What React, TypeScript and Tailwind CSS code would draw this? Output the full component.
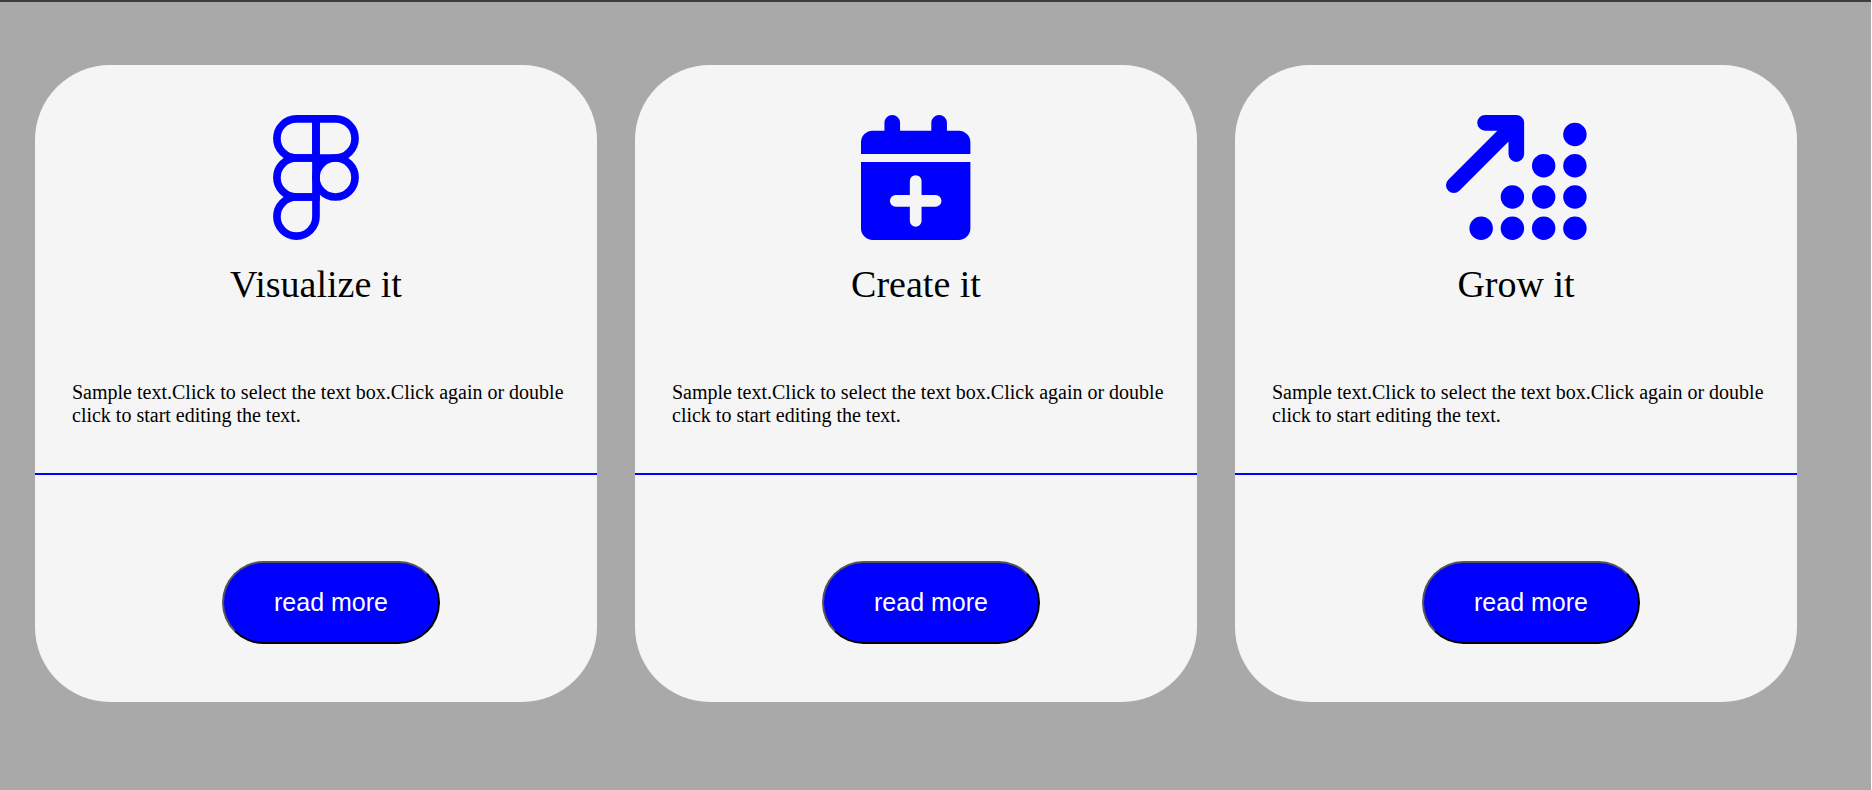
import type { ReactNode } from "react";

const sampleText =
  "Sample text.Click to select the text box.Click again or double click to start editing the text.";

function DesignIcon() {
  return (
    <svg
      viewBox="0 0 11 16"
      className="h-[125px] w-auto overflow-visible"
      fill="none"
      stroke="currentColor"
      strokeWidth="0.98"
      aria-hidden="true"
    >
      <path d="M5.5.5H3a2.5 2.5 0 0 0 0 5h2.5z" />
      <path d="M5.5.5H8a2.5 2.5 0 0 1 0 5H5.5z" />
      <path d="M5.5 5.5H3a2.5 2.5 0 0 0 0 5h2.5z" />
      <circle cx="8" cy="8" r="2.5" />
      <path d="M5.5 10.5H3A2.5 2.5 0 1 0 5.5 13z" />
    </svg>
  );
}

function CalendarIcon() {
  return (
    <svg
      viewBox="0 0 14 16"
      className="h-[125px] w-auto overflow-visible"
      fill="currentColor"
      aria-hidden="true"
    >
      <path d="M0 5V3.5A1.5 1.5 0 0 1 1.5 2H3V1a1 1 0 0 1 2 0v1h4V1a1 1 0 0 1 2 0v1h1.5A1.5 1.5 0 0 1 14 3.5V5z" />
      <path d="M0 6h14v8.5a1.5 1.5 0 0 1-1.5 1.5h-11A1.5 1.5 0 0 1 0 14.5z" />
      <path d="M4.45 11h5.1M7 8.45v5.1" stroke="#f5f5f5" strokeWidth="1.5" strokeLinecap="round" />
    </svg>
  );
}

const dots = [
  [16.5, 2.5],
  [12.5, 6.5],
  [16.5, 6.5],
  [8.5, 10.5],
  [12.5, 10.5],
  [16.5, 10.5],
  [4.5, 14.5],
  [8.5, 14.5],
  [12.5, 14.5],
  [16.5, 14.5],
];

function GrowthIcon() {
  return (
    <svg
      viewBox="0 0 18 16"
      className="h-[125px] w-auto overflow-visible"
      fill="currentColor"
      aria-hidden="true"
    >
      <path
        d="M1 9l8-8M5 1h4v4"
        fill="none"
        stroke="currentColor"
        strokeWidth="2"
        strokeLinecap="round"
        strokeLinejoin="round"
      />
      {dots.map(([cx, cy]) => (
        <circle key={`${cx}-${cy}`} cx={cx} cy={cy} r="1.5" />
      ))}
    </svg>
  );
}

function Card({ icon, title }: { icon: ReactNode; title: string }) {
  return (
    <article className="flex flex-col rounded-[75px] bg-[#f5f5f5] pt-[50px] pb-[58px]">
      <div className="flex justify-center text-[#0000ff]">{icon}</div>
      <h2 className="mt-[22px] text-center text-[38px] leading-[44px]">{title}</h2>
      <p className="mt-[75px] pr-6 pl-[37px] text-[20px] leading-[23px]">{sampleText}</p>
      <hr className="mt-[46px] border-t-2 border-[#0000ff]" />
      <div className="mt-[86px] flex justify-center pl-[30px]">
        <button
          type="button"
          className="rounded-full border-2 border-black bg-[#0000ff] px-[50px] py-[25px] font-['Liberation_Sans',Arial,sans-serif] text-[25px] leading-[29px] text-white [border-style:outset]"
        >
          read more
        </button>
      </div>
    </article>
  );
}

export default function App() {
  return (
    <div className="min-h-screen bg-white pr-px font-['Liberation_Serif','Times_New_Roman',serif] text-black">
      <main className="min-h-screen border-t-2 border-[#3f3b44] bg-[#a9a9a9] pt-[63px] pr-[74px] pb-[88px] pl-[35px]">
        <section className="grid grid-cols-3 gap-[38px]">
          <Card icon={<DesignIcon />} title="Visualize it" />
          <Card icon={<CalendarIcon />} title="Create it" />
          <Card icon={<GrowthIcon />} title="Grow it" />
        </section>
      </main>
    </div>
  );
}
